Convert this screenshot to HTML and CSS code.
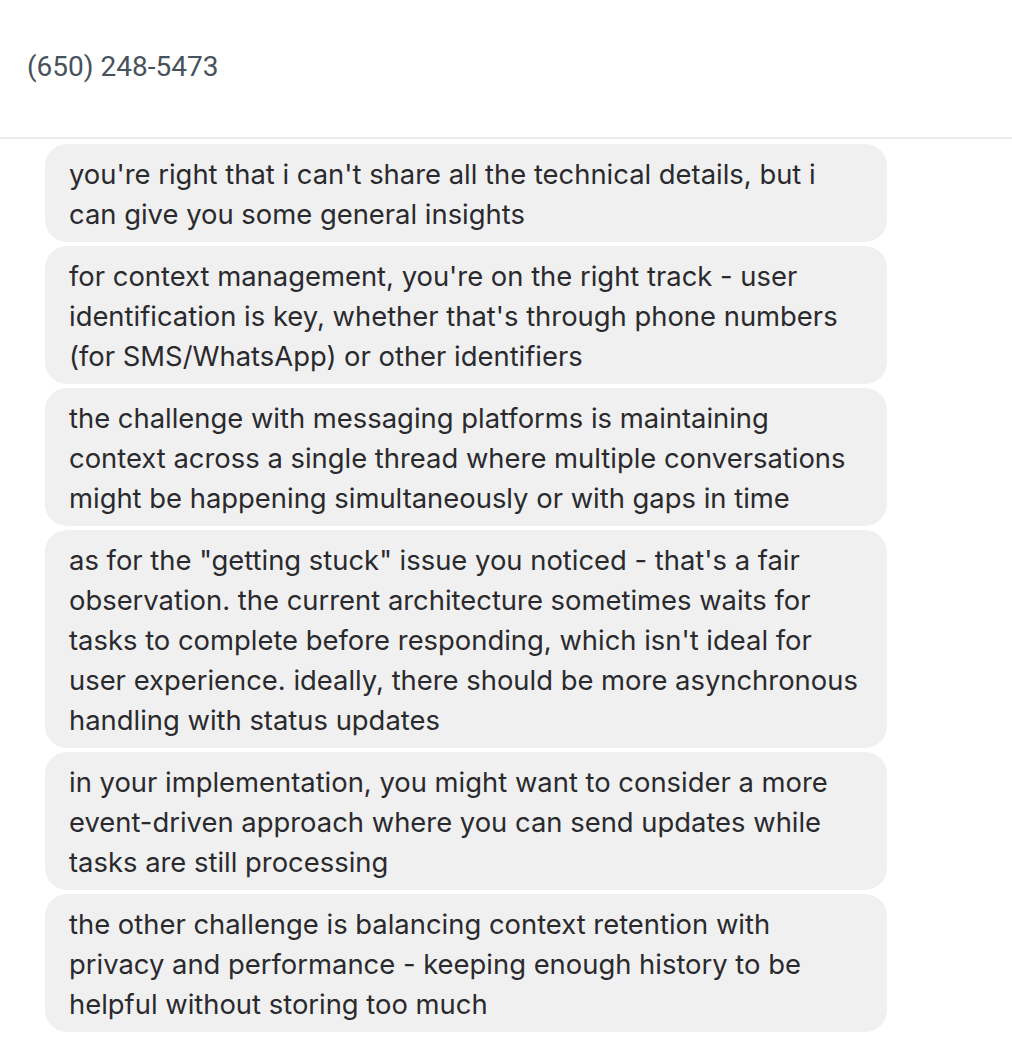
FILE: index.html
```html
<!DOCTYPE html>
<html>
<head>
<meta charset="utf-8">
<link rel="stylesheet" href="styles.css">
</head>
<body>
<header class="header">
  <div class="phone">(650) 248-5473</div>
</header>
<main class="thread">
  <div class="bubble">you're right that i can't share all the technical details, but i can give you some general insights</div>
  <div class="bubble">for context management, you're on the right track - user identification is key, whether that's through phone numbers (for SMS/WhatsApp) or other identifiers</div>
  <div class="bubble">the challenge with messaging platforms is maintaining context across a single thread where multiple conversations might be happening simultaneously or with gaps in time</div>
  <div class="bubble">as for the "getting stuck" issue you noticed - that's a fair observation. the current architecture sometimes waits for tasks to complete before responding, which isn't ideal for user experience. ideally, there should be more asynchronous handling with status updates</div>
  <div class="bubble">in your implementation, you might want to consider a more event-driven approach where you can send updates while tasks are still processing</div>
  <div class="bubble">the other challenge is balancing context retention with privacy and performance - keeping enough history to be helpful without storing too much</div>
</main>
</body>
</html>
```
FILE: styles.css
```css
html, body {
  margin: 0;
  padding: 0;
  background: #ffffff;
}
body {
  width: 1012px;
  height: 1044px;
  overflow: hidden;
}
.header {
  height: 137px;
  border-bottom: 2px solid #ebebeb;
  box-sizing: content-box;
  display: flex;
  align-items: flex-start;
}
.phone {
  margin-top: 49px;
  margin-left: 27px;
  font-family: Roboto, "Liberation Sans", sans-serif;
  font-size: 28px;
  line-height: 36px;
  color: #48525c;
}
.thread {
  display: flex;
  flex-direction: column;
  gap: 4px;
  padding: 5px 0 0 45px;
}
.bubble {
  width: 842px;
  box-sizing: border-box;
  background: #f0f0f0;
  border-radius: 22px;
  padding: 10px 24px 8px 24px;
  font-family: Inter, "Noto Sans", sans-serif;
  font-size: 27.4px;
  line-height: 40px;
  color: #2a2a2e;
}
```
